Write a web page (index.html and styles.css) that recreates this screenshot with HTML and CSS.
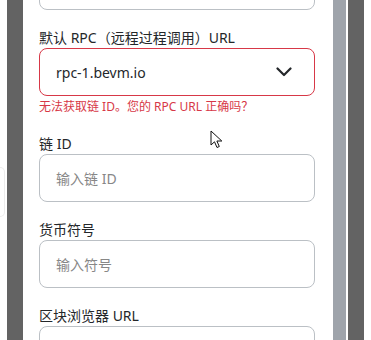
FILE: index.html
```html
<!DOCTYPE html>
<html lang="zh">
<head>
  <meta charset="UTF-8">
  <title>添加网络</title>
  <link rel="stylesheet" href="styles.css">
</head>
<body>
  <div class="edge-left">
    <div class="ghost-tab"></div>
  </div>
  <div class="shade"></div>

  <div class="panel">
    <div class="field first">
      <div class="input"></div>
    </div>

    <div class="field">
      <label class="label">默认 RPC（远程过程调用）URL</label>
      <div class="input select error">
        <span class="value">rpc-1.bevm.io</span>
        <svg class="chevron" width="16" height="10" viewBox="0 0 16 10">
          <path d="M1.5 1.5 L8 8 L14.5 1.5" fill="none" stroke="#24272a" stroke-width="2.2" stroke-linecap="round" stroke-linejoin="round"/>
        </svg>
      </div>
      <div class="error-text">无法获取链 ID。您的 RPC URL 正确吗？</div>
    </div>

    <div class="field">
      <label class="label">链 ID</label>
      <div class="input"><span class="placeholder">输入链 ID</span></div>
    </div>

    <div class="field">
      <label class="label">货币符号</label>
      <div class="input"><span class="placeholder">输入符号</span></div>
    </div>

    <div class="field">
      <label class="label">区块浏览器 URL</label>
      <div class="input"></div>
    </div>

    <!-- mouse pointer left in the shot -->
    <svg class="pointer" width="14" height="20" viewBox="0 0 14 20">
      <path d="M1 1 L1 15 L4.5 11.8 L7 17.5 L9.3 16.5 L6.9 11 L11.8 11 Z" fill="#fff" stroke="#111" stroke-width="1" stroke-linejoin="round"/>
    </svg>
  </div>

  <div class="scrollbar"></div>
  <div class="gap"></div>
  <div class="shade"></div>
  <div class="edge-right"></div>
</body>
</html>
```

FILE: styles.css
```css
body {
  margin: 0;
  height: 340px;
  overflow: hidden;
  display: flex;
  background: #fff;
  font-family: "Noto Sans", "Noto Sans CJK SC", sans-serif;
  color: #24272a;
}

.edge-left {
  width: 7px;
  background: #fff;
}

.ghost-tab {
  margin-top: 167px;
  width: 4px;
  height: 48px;
  border: 1px solid #ececec;
  border-left: none;
  border-radius: 0 24px 24px 0;
}

.shade {
  width: 16px;
  background: #636363;
}

.panel {
  position: relative;
  width: 310px;
  height: 340px;
  overflow: hidden;
  box-sizing: border-box;
  padding: 0 18px 0 16px;
  background: #fff;
}

.field {
  display: flex;
  flex-direction: column;
  margin-top: 18px;
}

.field.first {
  margin-top: -38px;
}

.label {
  font-size: 14px;
  line-height: 20px;
  color: #24272a;
}

.input {
  height: 48px;
  flex-shrink: 0;
  box-sizing: border-box;
  border: 1px solid #bbc0c5;
  border-radius: 8px;
  padding: 0 16px;
  display: flex;
  align-items: center;
  font-size: 14px;
}

.input.error {
  border-color: #d73847;
}

.select {
  justify-content: space-between;
  padding-right: 22px;
}

.value {
  color: #24272a;
}

.placeholder {
  color: #878787;
}

.error-text {
  margin-top: 2px;
  font-size: 12px;
  line-height: 18px;
  color: #d73847;
}

.pointer {
  position: absolute;
  left: 187px;
  top: 130px;
}

.scrollbar {
  width: 13px;
  background: #9fa4ab;
}

.gap {
  width: 2px;
  background: #fff;
}

.edge-right {
  width: 7px;
  background: #fff;
}
```
